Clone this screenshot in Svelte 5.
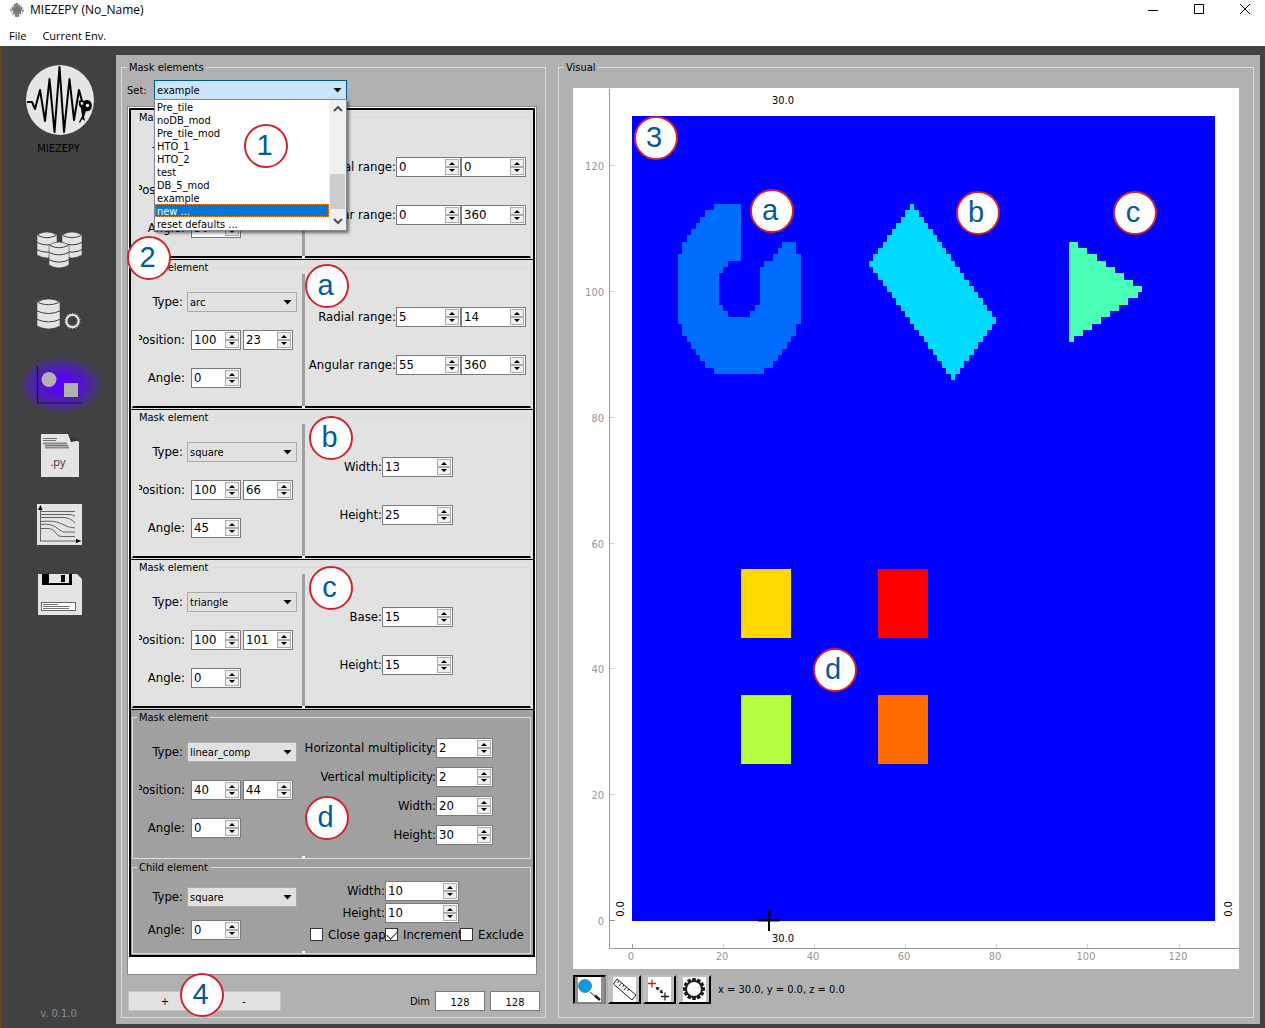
<script>
  const sets = ['Pre_tile', 'noDB_mod', 'Pre_tile_mod', 'HTO_1', 'HTO_2', 'test', 'DB_5_mod', 'example', 'new ...', 'reset defaults ...'];
  let selected = $state('example');
  const highlighted = 'new ...';

  const types = ['arc', 'square', 'triangle', 'linear_comp'];

  const elements = [
    { legend: 'Mask element', type: 'arc', pos: [30, 30], angle: 30, kind: 'arc',
      rows: [['Radial range:', 0, 0], ['Angular range:', 0, 360]] },
    { legend: 'Mask element', type: 'arc', pos: [100, 23], angle: 0, kind: 'arc', badge: 'a',
      rows: [['Radial range:', 5, 14], ['Angular range:', 55, 360]] },
    { legend: 'Mask element', type: 'square', pos: [100, 66], angle: 45, kind: 'simple', badge: 'b',
      rows: [['Width:', 13], ['Height:', 25]] },
    { legend: 'Mask element', type: 'triangle', pos: [100, 101], angle: 0, kind: 'simple', badge: 'c',
      rows: [['Base:', 15], ['Height:', 15]] },
    { legend: 'Mask element', type: 'linear_comp', pos: [40, 44], angle: 0, kind: 'comp', badge: 'd', dark: true,
      rows: [['Horizontal multiplicity:', 2], ['Vertical multiplicity:', 2], ['Width:', 20], ['Height:', 30]] },
    { legend: 'Child element', type: 'square', angle: 0, kind: 'child', dark: true,
      rows: [['Width:', 10], ['Height:', 10]],
      checks: [['Close gap', false], ['Increment', true], ['Exclude', false]] },
  ];

  // Plot geometry: a 128 x 128 detector mask
  const N = 128;
  const X0 = 59, Y0 = 28, W = 583, H = 805;
  const cx = (c) => Math.round(X0 + (c * W) / N);
  const cy = (r) => Math.round(Y0 + (r * H) / N);
  const toPath = (runs) =>
    runs.map(([r, a, b]) => `M${cx(a)} ${cy(r)}H${cx(b)}V${cy(r + 1)}H${cx(a)}Z`).join('');
  const range = (a, b) => Array.from({ length: b - a }, (_, i) => a + i);

  const arcLeft = [18, 16, 15, 14, 13, 12, 11, 11, 10, 10, 10, 10, 10, 10, 10, 10, 10, 10, 10, 11, 11, 12, 13, 14, 15, 16, 18];
  const arcInner = { 23: [21, 29], 24: [20, 28], 25: [19, 28], 26: [19, 28], 27: [19, 28], 28: [19, 28], 29: [19, 28], 30: [20, 27], 31: [21, 26] };
  const arcRuns = range(14, 41).flatMap((r) => {
    const left = arcLeft[r - 14];
    if (r < 20) return [[r, left, 24]];
    if (r === 20) return [[r, left, 24], [r, 33, 36]];
    if (r === 21) return [[r, left, 24], [r, 32, 36]];
    if (r === 22) return [[r, left, 24], [r, 31, 37]];
    const right = 47 - left;
    if (arcInner[r]) return [[r, left, arcInner[r][0]], [r, arcInner[r][1], right]];
    return [[r, left, right]];
  });
  const squareRuns = range(14, 42).map((r) => [r, r <= 23 ? 75 - r : 29 + r, r <= 32 ? 48 + r : 112 - r]);
  const triRuns = range(20, 36).map((r) => [r, 96, r <= 27 ? 58 + 2 * r : 167 - 2 * r]);
  const block = (r, c) => range(r, r + 11).map((y) => [y, c, c + 11]);

  const shapes = [
    ['#006dff', arcRuns],
    ['#00dbff', squareRuns],
    ['#49ffb6', triRuns],
    ['#ffd900', block(72, 24)],
    ['#ff0000', block(72, 54)],
    ['#b6ff41', block(92, 24)],
    ['#ff6d00', block(92, 54)],
  ];
  const ticks = [0, 20, 40, 60, 80, 100, 120];
  const plotBadges = [['3', 83, 50], ['a', 199, 123], ['b', 405, 125], ['c', 562, 125], ['d', 262, 582]];
  const teeth = range(0, 12).map((i) => i * 30);
  const smallTeeth = range(0, 18).map((i) => i * 20);
</script>

{#snippet spin(id, value, label)}
  <span class="spin">
    <input {id} type="text" inputmode="numeric" {value} aria-label={label} />
    <span class="steps">
      <button type="button" aria-label="Increase"><svg viewBox="0 0 12 6"><path d="M3 5L6 2L9 5Z" /></svg></button>
      <button type="button" aria-label="Decrease"><svg viewBox="0 0 12 6"><path d="M3 1L6 4L9 1Z" /></svg></button>
    </span>
  </span>
{/snippet}

{#snippet db(x, y, w, h)}
  <g transform="translate({x} {y})">
    <path d="M0 3V{h - 3}Q{w / 2} {h + 3} {w} {h - 3}V3Q{w / 2} -3 0 3Z" fill="#e4e4e4" stroke="#404142" stroke-width="0.6" />
    <path d="M1 3.5Q{w / 2} 8 {w - 1} 3.5M0 {h * 0.4}Q{w / 2} {h * 0.4 + 5} {w} {h * 0.4}M0 {h * 0.68}Q{w / 2} {h * 0.68 + 5} {w} {h * 0.68}" fill="none" stroke="#404142" stroke-width="1" />
  </g>
{/snippet}

<div class="window">
  <header class="titlebar">
    <svg class="appicon" viewBox="0 0 16 16" aria-hidden="true">
      <circle cx="8" cy="8" r="7" fill="#dcdcdc" />
      <path d="M1 8H3L4 5L5 12L6 2L7 15L8 1L9 15L10 3L11 12L12 5L13 9H15" fill="none" stroke="#555" stroke-width="0.8" />
    </svg>
    <span class="title">MIEZEPY (No_Name)</span>
    <div class="winbtns">
      <button type="button" aria-label="Minimize"><svg viewBox="0 0 12 12"><path d="M1 6.500H11" /></svg></button>
      <button type="button" aria-label="Maximize"><svg viewBox="0 0 12 12"><path d="M1.500 0.500H10.500V9.500H1.500Z" /></svg></button>
      <button type="button" aria-label="Close"><svg viewBox="0 0 12 12"><path d="M1 0L11 10M11 0L1 10" /></svg></button>
    </div>
  </header>
  <nav class="menubar" aria-label="Menu">
    <button type="button">File</button>
    <button type="button">Current Env.</button>
  </nav>

  <div class="body">
    <aside class="sidebar">
      <svg class="logo" viewBox="1 60 115 80" role="img" aria-label="MIEZEPY logo">
        <ellipse cx="60" cy="100" rx="34" ry="35" fill="#e6e6e6" />
        <path d="M27 102H32L35 109L40 90L45 121L49.500 79L54.500 132L59.500 67L64 132L69.500 79L74 120L79 90L82 101" fill="none" stroke="#000" stroke-width="2" stroke-linejoin="round" />
        <path d="M79 101Q81 98 84 101Q87 99 90 101Q93 104 91 109Q89 112 86 111L84 117L85 121L82 119L80 123L79 122L82 116L81 108Q78 106 79 101Z" />
        <circle cx="82" cy="103.500" r="1.400" fill="#e6e6e6" />
        <circle cx="87.500" cy="105.500" r="1.800" fill="#e6e6e6" />
      </svg>
      <div class="brand">MIEZEPY</div>
      <nav class="tools" aria-label="Sections">
        <button type="button" aria-label="Data sets">
          <svg viewBox="1 210 115 70">{@render db(37, 232, 20, 26)}{@render db(62, 232, 20, 26)}{@render db(49, 242, 20, 26)}</svg>
        </button>
        <button type="button" aria-label="Data processing">
          <svg viewBox="1 280 115 70">
            {@render db(37, 299, 23, 30)}
            <g transform="translate(72.500 321)">
              {#each smallTeeth as a}<path d="M-1 -6L0 -8.500L1 -6Z" fill="#e4e4e4" transform="rotate({a})" />{/each}
              <circle r="6" fill="none" stroke="#e4e4e4" stroke-width="2" />
            </g>
          </svg>
        </button>
        <button type="button" aria-label="Mask" aria-current="page">
          <svg viewBox="1 350 115 70">
            <defs><radialGradient id="glow"><stop offset="0" stop-color="#5a00ff" /><stop offset="0.2" stop-color="#5802f6" /><stop offset="0.6" stop-color="#4c1fb0" /><stop offset="0.85" stop-color="#473478" stop-opacity="0.9" /><stop offset="1" stop-color="#404142" stop-opacity="0" /></radialGradient></defs>
            <ellipse cx="61" cy="385" rx="43" ry="29" fill="url(#glow)" />
            <path d="M37.500 366V403H82" fill="none" stroke="#1b1033" stroke-width="1.200" />
            <circle cx="49" cy="379.500" r="7.500" fill="#b1b1b1" /><rect x="64" y="383" width="14" height="14" fill="#b1b1b1" />
          </svg>
        </button>
        <button type="button" aria-label="Script">
          <svg viewBox="1 420 115 70">
            <path d="M41 434H68L79 442V477H41Z" fill="#e4e4e4" />
            <path d="M68 434L71 442L79 440.500Z" fill="#333" />
            <path d="M43 438.500H57M43 440.500H56" stroke="#555" stroke-width="0.8" />
            <path d="M43 443.500H67M45 447.500H69" stroke="#888" stroke-width="2" /><path d="M45 445.500H68" stroke="#555" stroke-width="0.8" />
            <text class="py" x="58" y="466">.py</text>
          </svg>
        </button>
        <button type="button" aria-label="Results">
          <svg viewBox="1 490 115 70">
            <rect x="37" y="504" width="45" height="41" fill="#e4e4e4" />
            <path d="M40.500 541V508M40 541H77" fill="none" stroke="#444" stroke-width="0.8" /><path d="M38 510L40.500 505L42.500 510ZM76 539L81.500 541L76 543Z" />
            <path d="M41 511.500H75M41 514.500H66Q72 514 75 516M41 517.500H62Q70 517 75 523M41 521.500Q55 520 62 524T75 528M41 524.500Q51 523 57 528T66 532H75M41 528.500H49Q54 529 56 533T62 536.500H75" fill="none" stroke="#555" stroke-width="0.9" />
          </svg>
        </button>
        <button type="button" aria-label="Save">
          <svg viewBox="1 560 115 70">
            <path d="M38 574H77L82 579V615H38Z" fill="#e4e4e4" />
            <path d="M42 574H72V585H42Z" /><path d="M49 574H69V583H49Z" fill="#e4e4e4" /><path d="M61 575H65V582H61Z" />
            <rect x="41.500" y="602.500" width="34" height="8" fill="#fff" stroke="#444" stroke-width="0.8" />
            <path d="M43 604.500H58M43 606.500H70M43 608.500H69" stroke="#333" stroke-width="0.7" />
          </svg>
        </button>
      </nav>
      <div class="version">v. 0.1.0</div>
    </aside>

    <main class="content">
      <fieldset class="group mask">
        <legend>Mask elements</legend>
        <div class="setrow">
          <label for="set">Set:</label>
          <div class="combo open">
            <select id="set" bind:value={selected}>
              {#each sets as s}<option>{s}</option>{/each}
            </select>
            <svg class="arrow" viewBox="0 0 8 5"><path d="M0 0H8L4 4.500Z" /></svg>
            <div class="popup">
              <ul role="listbox" aria-label="Sets">
                {#each sets as s}
                  <li role="option" aria-selected={s === highlighted} class:hl={s === highlighted}>{s}</li>
                {/each}
              </ul>
              <div class="scroll">
                <svg viewBox="0 0 10 8"><path d="M1 6L5 2L9 6" /></svg>
                <div class="thumb"></div>
                <svg viewBox="0 0 10 8"><path d="M1 2L5 6L9 2" /></svg>
              </div>
              <span class="badge one">1</span>
            </div>
          </div>
        </div>

        <div class="list">
          <div class="frame">
            {#each elements as el, i}
              <section class="item {el.kind}" class:dark={el.dark}>
                <fieldset>
                  <legend>{el.legend}</legend>
                  <div class="panes">
                    <div class="left">
                      <div class="row">
                        <label for="type{i}" class="short">Type:</label>
                        <div class="combo">
                          <select id="type{i}" value={el.type}>
                            {#each types as t}<option>{t}</option>{/each}
                          </select>
                          <svg class="arrow" viewBox="0 0 8 5"><path d="M0 0H8L4 4.500Z" /></svg>
                        </div>
                      </div>
                      {#if el.pos}
                        <div class="row">
                          <label for="pos{i}">Position:</label>
                          {@render spin(`pos${i}`, el.pos[0], 'Position x')}
                          {@render spin(`posy${i}`, el.pos[1], 'Position y')}
                        </div>
                      {/if}
                      <div class="row">
                        <label for="angle{i}">Angle:</label>
                        {@render spin(`angle${i}`, el.angle, 'Angle')}
                      </div>
                    </div>
                    <div class="splitter"></div>
                    <div class="right">
                      {#each el.rows as row, j}
                        <div class="row">
                          <label for="p{i}{j}">{row[0]}</label>
                          {#each row.slice(1) as v, k}
                            {@render spin(k ? `p${i}${j}b` : `p${i}${j}`, v, k ? `${row[0]} end` : row[0])}
                          {/each}
                        </div>
                      {/each}
                      {#if el.checks}
                        <div class="checks">
                          {#each el.checks as [name, on]}
                            <label><input type="checkbox" checked={on} /><span>{name}</span></label>
                          {/each}
                        </div>
                      {/if}
                      {#if el.badge}<span class="badge at-{el.badge}">{el.badge}</span>{/if}
                    </div>
                  </div>
                </fieldset>
                {#if i === 1}<span class="badge two">2</span>{/if}
              </section>
            {/each}
          </div>
        </div>

        <div class="footer">
          <button type="button">+</button>
          <button type="button">-</button>
          <span class="badge four">4</span>
          <label for="dimx">Dim</label>
          <input id="dimx" type="text" value="128" />
          <input type="text" value="128" aria-label="Dim y" />
        </div>
      </fieldset>

      <fieldset class="group visual">
        <legend>Visual</legend>
        <div class="view">
          <svg class="plot" viewBox="0 0 666 881" role="img" aria-label="Mask preview">
            <rect width="666" height="881" fill="#fff" />
            <g shape-rendering="crispEdges">
              <rect x={X0} y={Y0} width={W} height={H} fill="#00f" />
              {#each shapes as [fill, runs]}<path d={toPath(runs)} {fill} />{/each}
            </g>
            <path d="M36.500 1V860.500H666" fill="none" stroke="#969696" />
            {#each ticks as t}
              <path d="M37 {cy(N - t) - 0.5}h5M{cx(t) + 0.5} 860v-4" stroke={t ? '#d0d0d0' : '#969696'} />
              <text class="tick" x="31" y={cy(N - t) + 4} text-anchor="end">{t}</text>
              <text class="tick" x={cx(t) - 1} y="872" text-anchor="middle">{t}</text>
            {/each}
            <text x="210" y="16" text-anchor="middle">30.0</text>
            <text x="210" y="854" text-anchor="middle">30.0</text>
            <text transform="translate(51 821) rotate(-90)" text-anchor="middle">0.0</text>
            <text transform="translate(659 821) rotate(-90)" text-anchor="middle">0.0</text>
            <path d="M185 832.500H207M196 822V843" stroke="#000" stroke-width="2" />
            {#each plotBadges as [t, x, y]}
              <circle cx={x} cy={y} r="21" fill="#fff" stroke="#d2232a" stroke-width="2" />
              <text class="mark" x={x - 2} y={y + 9} text-anchor="middle">{t}</text>
            {/each}
          </svg>
          <div class="toolbar">
            <button type="button" class="on" aria-label="Zoom">
              <svg viewBox="0 0 29 25"><rect x="3" width="23" height="25" fill="#fff" /><path d="M15 15L24 23" stroke="#333" /><path d="M20 18.500L25 23" stroke="#222" stroke-width="2.500" /><circle cx="10" cy="9" r="6.500" fill="#0a9fdc" stroke="#2a6f90" stroke-width="0.7" /></svg>
            </button>
            <button type="button" aria-label="Measure">
              <svg viewBox="0 0 29 25"><rect x="3" width="23" height="25" fill="#fff" /><path d="M7 2L26 18L22 23L3.500 7Z" fill="none" stroke="#222" /><path d="M9 4L7.500 6M11.500 6L9 9M14 8L12.500 10M16.500 10L14 13M19 12L17.500 14" stroke="#222" /></svg>
            </button>
            <button type="button" aria-label="Move points">
              <svg viewBox="0 0 29 25"><rect x="3" width="23" height="25" fill="#fff" /><path d="M3 6.500H11M7 2.500V10.500" stroke="#d2232a" stroke-width="1.300" /><path d="M16 19.500H24M20 15.500V23.500" stroke="#222" stroke-width="1.300" /><path d="M12 11L17 15" stroke="#111" stroke-dasharray="3 1" /><path d="M10.500 10L14.500 10.500L12 13.500ZM18 16.500L14.500 15.500L17 12.500Z" /></svg>
            </button>
            <button type="button" aria-label="Settings">
              <svg viewBox="0 0 29 25"><rect x="3" width="23" height="25" fill="#fff" /><g transform="translate(14 12)">{#each teeth as a}<rect x="-1.800" y="-11" width="3.600" height="4" fill="#1c1c1c" transform="rotate({a})" />{/each}<circle r="8" fill="#fff" stroke="#1c1c1c" stroke-width="2" /></g></svg>
            </button>
            <output>x = 30.0, y = 0.0, z = 0.0</output>
          </div>
        </div>
      </fieldset>
    </main>
  </div>
</div>

<style>
  :global(body) { margin: 0; }
  .window, .window * { box-sizing: border-box; }
  .window {
    display: flex; flex-direction: column; min-height: 100vh;
    font: 11px/14px 'DejaVu Sans Condensed', 'DejaVu Sans', sans-serif;
    color: #000; background: #404142;
  }
  button, input, select { font: inherit; color: inherit; margin: 0; padding: 0; border: 0; background: none; border-radius: 0; }
  ul { list-style: none; margin: 0; padding: 0; }
  fieldset { margin: 0; padding: 0; min-width: 0; border: 1px solid #dcdcdc; }
  svg { display: block; }

  .titlebar, .menubar { font: 12px/16px 'Open Sans', sans-serif; background: #fff; display: flex; align-items: center; }
  .titlebar { height: 20px; padding-left: 9px; gap: 5px; }
  .appicon { width: 16px; height: 16px; }
  .winbtns { margin-left: auto; display: flex; gap: 6px; }
  .winbtns button { width: 40px; height: 20px; display: grid; place-items: center; }
  .winbtns svg { width: 12px; height: 12px; fill: none; stroke: #000; }
  .menubar { height: 26px; padding: 6px 9px 0; gap: 16px; font-size: 11px; }

  .body { flex: 1; display: flex; border-left: 1px solid #6b4720; padding: 9px 5px 4px 0; }
  .sidebar { width: 115px; flex: none; display: flex; flex-direction: column; align-items: center; padding-top: 5px; }
  .logo { width: 115px; height: 80px; }
  .brand { margin-top: 2px; font-size: 11px; }
  .tools { margin-top: 54px; }
  .tools button { display: block; }
  .tools svg { width: 115px; height: 70px; }
  .py { font: 11px 'Open Sans', sans-serif; text-anchor: middle; fill: #333; }
  .version { margin-top: auto; margin-bottom: 3px; color: #8c8c8c; }

  .content { flex: 1; min-width: 0; background: #b1b1b1; padding: 5px 6px 6px 5px; display: grid; grid-template-columns: minmax(0, 425fr) minmax(0, 696fr); gap: 12px; }
  legend { padding: 2px 2px 0; line-height: 12px; }
  .visual legend { margin-left: 5px; }
  .mask { display: flex; flex-direction: column; padding: 6px 5px 6px; }
  .view { padding: 0 14px; }

  .setrow { display: flex; align-items: center; height: 20px; }
  .setrow label { width: 27px; padding-top: 2px; }
  .combo { position: relative; width: 110px; height: 20px; }
  .combo select { appearance: none; width: 100%; height: 20px; padding: 2px 2px 0; border: 1px solid #acacac; background: #e1e1e1; }
  .arrow { position: absolute; right: 5px; top: 8px; width: 9px; height: 5px; pointer-events: none; }
  .combo.open { width: 193px; }
  .combo.open select { background: #cce4f7; border-color: #005499; }
  .popup { position: absolute; z-index: 5; top: 19px; left: 0; right: 0; display: flex; border: 1px solid #828790; background: #fff; box-shadow: 2px 2px 3px #0008; }
  .popup ul { flex: 1; }
  .popup li { height: 13px; line-height: 15px; padding-left: 2px; }
  .popup .hl { background: #0078d7; color: #fff; outline: 1px dotted #ff8728; outline-offset: -1px; }
  .scroll { width: 17px; background: #f0f0f0; display: flex; flex-direction: column; align-items: center; padding: 5px 1px; }
  .scroll svg { width: 10px; height: 8px; fill: none; stroke: #505050; stroke-width: 2; }
  .thumb { width: 15px; height: 35px; margin: auto 0 8px; background: #cdcdcd; }

  .list { margin: 6px 3px 0 0; flex: 1; border: 1px solid #828790; background: #fff; padding: 1px 1px 0; }
  .frame { border: 2px solid #000; }
  .item { position: relative; background: #e2e2e2; border-bottom: 1px solid #000; padding: 0 2px 1px 1px; }
  .item fieldset { border-color: #dadada; border-bottom: 2px solid #000; }
  .item legend { margin-left: 4px; }
  .panes { display: flex; height: 132px; }
  .dark { background: #a0a0a0; border-bottom: 0; }
  .dark fieldset { border: 1px solid #dcdcdc; }
  .dark .panes { height: 134px; }
  .child .panes { height: 79px; }
  .left { width: 169px; padding-left: 6px; display: flex; flex-direction: column; justify-content: center; gap: 18px; }
  .dark .left { padding-bottom: 2px; }
  .child .left { gap: 13px; padding-bottom: 0; }
  .left, .right { font-size: 13px; }
  .row { display: flex; align-items: center; height: 20px; }
  .left .row { gap: 2px; }
  .row label { display: flex; justify-content: flex-end; white-space: nowrap; }
  .left label { width: 46px; margin-right: 4px; overflow: hidden; }
  .left label.short { width: 44px; margin-right: 2px; }
  .left .combo { font-size: 11px; }
  .left .spin { width: 50px; }
  .splitter { position: relative; width: 3px; background: #a0a0a0; }
  .splitter::after { content: ''; position: absolute; left: 0; bottom: -2px; width: 3px; height: 2px; background: #fff; }
  .dark .splitter::after { bottom: 0; }

  .right { position: relative; flex: 1; padding: 2px 0 0 5px; display: flex; flex-direction: column; justify-content: center; gap: 28px; }
  .arc .right label { width: 86px; }
  .arc .right .spin { width: 65px; }
  .simple .right label { width: 72px; }
  .simple .right .spin { width: 71px; }
  .comp .right { gap: 9px; padding-top: 0; }
  .comp .right label { width: 126px; }
  .comp .right .spin { width: 57px; }
  .child .right { gap: 2px; padding: 0 0 5px 5px; }
  .child .right .row label { width: 75px; }
  .child .right .spin { width: 74px; }

  .spin { display: flex; height: 20px; border: 1px solid #7a7a7a; background: #fff; padding: 1px; }
  .spin input { flex: 1; width: 0; min-width: 0; padding-left: 1px; outline: 0; }
  .steps { width: 14px; display: flex; flex-direction: column; }
  .steps button { flex: 1; border: 1px solid #acacac; background: #f0f0f0; display: grid; place-items: center; }
  .steps svg { width: 12px; height: 6px; }

  .checks { display: flex; padding-top: 3px; }
  .checks label { width: 75px; display: flex; align-items: center; gap: 5px; white-space: nowrap; overflow: hidden; }
  .checks label:last-child { width: auto; }
  .checks input { appearance: none; flex: none; width: 13px; height: 13px; border: 1px solid #333; background: #fff; display: grid; place-items: center; }
  .checks input:checked::after { content: ''; width: 9px; height: 5px; border: solid #333; border-width: 0 0 1px 1px; transform: translateY(-1px) rotate(-45deg); }

  .footer { position: relative; display: flex; align-items: center; height: 20px; margin: 16px 0 0 1px; gap: 5px; }
  .footer button { width: 74px; height: 20px; background: #e1e1e1; border: 1px solid #c4c4c4; padding-top: 2px; }
  .footer label { margin-left: auto; padding-top: 2px; }
  .footer input { width: 50px; height: 20px; border: 1px solid #7a7a7a; background: #fff; text-align: center; padding-top: 2px; }

  .badge { position: absolute; z-index: 6; width: 44px; height: 44px; border: 2px solid #d2232a; border-radius: 50%; background: #fff; color: #005b99; font: 29px/38px 'Liberation Sans', sans-serif; text-align: center; padding-right: 3px; }
  .one { left: 89px; top: 24px; }
  .two { left: -4px; top: -24px; }
  .four { left: 52px; top: -18px; }
  .at-a, .at-d { left: 0; top: -10px; }
  .at-b, .at-c { left: 4px; top: -8px; }
  .at-d { top: 72px; }

  .plot { width: 100%; height: auto; margin-top: 14px; }
  .plot text { font: 11px 'DejaVu Sans Condensed', 'DejaVu Sans', sans-serif; }
  .plot .tick { fill: #969696; }
  .plot .mark { font: 29px 'Liberation Sans', sans-serif; fill: #005b99; }
  .toolbar { display: flex; align-items: center; gap: 2px; margin-top: 6px; }
  .toolbar button { width: 33px; height: 29px; background: #c0c0c0; border: solid; border-width: 2px; border-color: #c0c0c0 #000 #000 #c0c0c0; }
  .toolbar .on { background: #909090; border-color: #000 #808080 #808080 #000; }
  .toolbar svg { width: 29px; height: 25px; fill: #111; }
  .toolbar output { margin-left: 5px; }
</style>
